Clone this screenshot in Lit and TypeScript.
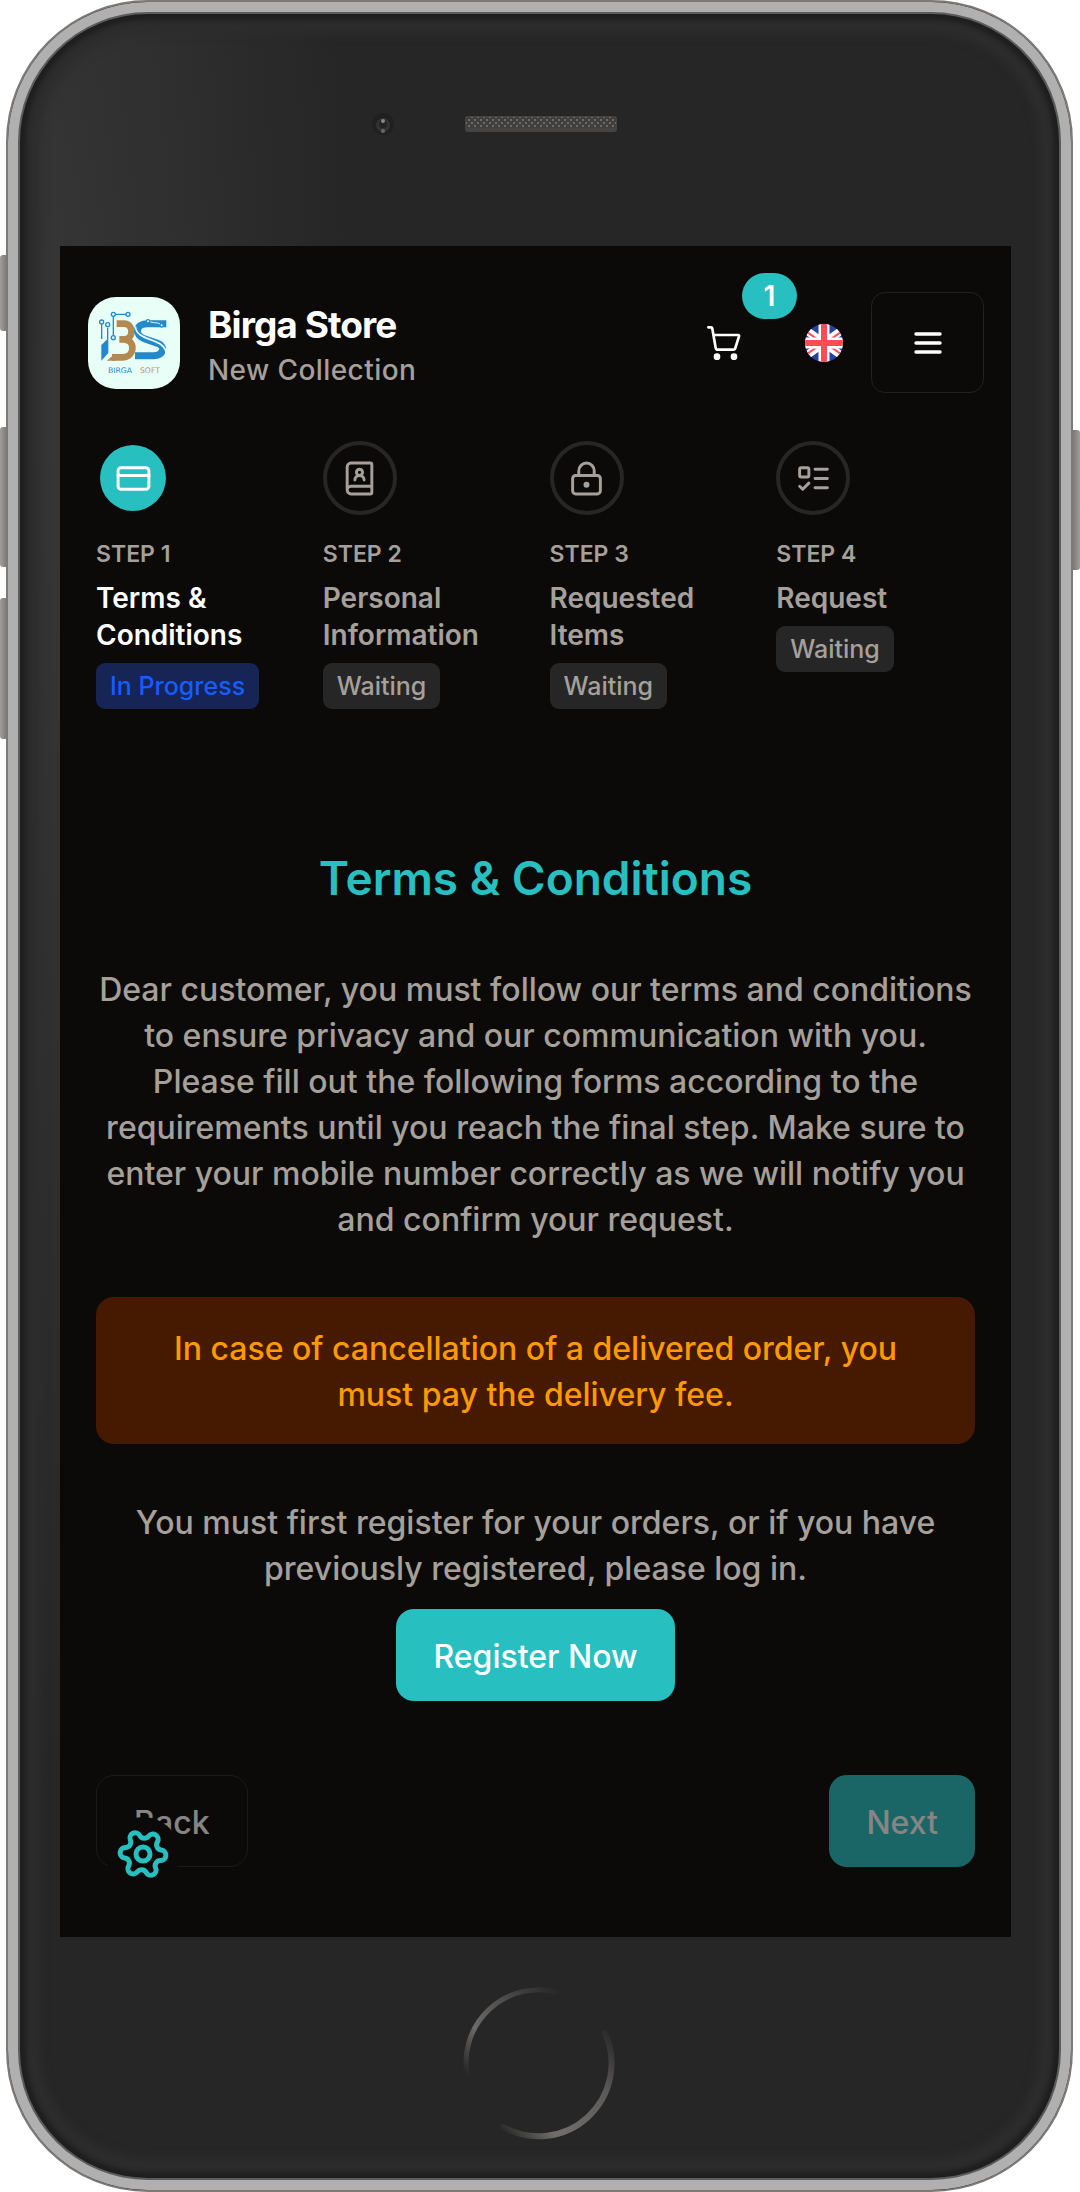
import { LitElement, html, svg, css } from "lit";
import { customElement } from "lit/decorators.js";

interface Step {
  label: string;
  title: string;
  status: string;
  active: boolean;
  icon: unknown;
}

const cardIcon = svg`<rect x="2" y="5" width="20" height="14" rx="2"/><path d="M2 10h20"/>`;
const bookIcon = svg`<path d="M15 13a3 3 0 1 0-6 0"/><path d="M4 19.5v-15A2.5 2.5 0 0 1 6.5 2H19a1 1 0 0 1 1 1v18a1 1 0 0 1-1 1H6.5a1 1 0 0 1 0-5H20"/><circle cx="12" cy="8" r="2"/>`;
const lockIcon = svg`<circle cx="12" cy="16" r="1"/><rect x="3" y="10" width="18" height="12" rx="2"/><path d="M7 10V7a5 5 0 0 1 10 0v3"/>`;
const listIcon = svg`<rect x="3" y="5" width="6" height="6" rx="1"/><path d="m3 17 2 2 4-4M13 6h8M13 12h8M13 18h8"/>`;

const steps: Step[] = [
  { label: "STEP 1", title: "Terms & Conditions", status: "In Progress", active: true, icon: cardIcon },
  { label: "STEP 2", title: "Personal Information", status: "Waiting", active: false, icon: bookIcon },
  { label: "STEP 3", title: "Requested Items", status: "Waiting", active: false, icon: lockIcon },
  { label: "STEP 4", title: "Request", status: "Waiting", active: false, icon: listIcon },
];

/** Six-lobed gear outline: convex arcs for the teeth joined by concave arcs. */
function gearPath(): string {
  const tooth = 17.5;
  const valley = 21;
  const r = 5.25;
  const at = (radius: number, deg: number) => {
    const a = (deg * Math.PI) / 180;
    return [radius * Math.cos(a), radius * Math.sin(a)];
  };
  const mid = (a: number[], b: number[]) =>
    `${((a[0] + b[0]) / 2).toFixed(2)} ${((a[1] + b[1]) / 2).toFixed(2)}`;
  let d = "";
  for (let k = 0; k < 6; k++) {
    const angle = 4 + k * 60;
    const t = at(tooth, angle);
    const before = at(valley, angle - 30);
    const after = at(valley, angle + 30);
    const next = at(tooth, angle + 60);
    if (k === 0) d += `M${mid(before, t)}`;
    d += `A${r} ${r} 0 0 1 ${mid(t, after)}A${r} ${r} 0 0 0 ${mid(after, next)}`;
  }
  return d + "Z";
}

@customElement("store-header")
export class StoreHeader extends LitElement {
  static styles = css`
    :host { display: block; }
    .bar { display: flex; align-items: center; justify-content: space-between; padding: 46px 27px 0 28px; }
    .brand { display: flex; align-items: center; gap: 28px; text-decoration: none; }
    .logo { display: block; width: 92px; height: 92px; border-radius: 28px; background: #e8fff8; }
    .names { display: flex; flex-direction: column; gap: 4px; padding-top: 6px; }
    .name { margin: 0; font-size: 37px; line-height: 46px; font-weight: 700; letter-spacing: -0.025em; color: #fff; }
    .tagline { font-size: 28px; line-height: 37px; font-weight: 500; letter-spacing: 0.015em; color: #a6a09b; }
    .actions { display: flex; align-items: center; gap: 28px; }
    button { margin: 0; border: 0; padding: 0; background: none; color: #fff; font: inherit; }
    .cart { position: relative; display: flex; align-items: center; height: 38px; padding: 0 36px; }
    .cart svg { display: block; width: 34px; height: 34px; }
    .count {
      position: absolute; top: -51px; right: -20px; min-width: 55px; box-sizing: border-box;
      border-radius: 23px; background: #28bfc1; font-size: 28px; line-height: 46px; font-weight: 600; text-align: center;
    }
    .lang svg { display: block; width: 38px; height: 38px; }
    .menu {
      display: flex; align-items: center; justify-content: center; width: 113px; height: 101px;
      box-sizing: border-box; border: 1px solid #23201f; border-radius: 14px;
    }
    .menu svg { display: block; width: 28px; height: 24px; }
    .wordmark { font-family: "DejaVu Sans", sans-serif; font-size: 23px; }
  `;

  render() {
    return html`
      <header class="bar">
        <a class="brand" href="#" aria-label="Birga Store home">
          <svg class="logo" viewBox="0 0 276 276" aria-hidden="true">
            <path d="M86 80h22c30 0 30 47 0 47h-14M106 127c38 0 36 54-4 54H72" fill="none" stroke="#b5884f" stroke-width="20"/>
            <path d="M80 171l-24 20h26z" fill="#b5884f"/>
            <path d="M235 80h-56c-36 0-42 34-8 46l38 13c26 10 16 37-12 37h-56" fill="none" stroke="#2389cb" stroke-width="21"/>
            <path d="M142 88c4 50 92 30 93 86" fill="none" stroke="#e8fff8" stroke-width="5"/>
            <path d="M186 74c14 6 24 0 34 10" fill="none" stroke="#e8fff8" stroke-width="3"/>
            <path d="M40 144l21-20v44l-21 23z" fill="#2389cb"/>
            <g fill="none" stroke="#2389cb" stroke-width="4">
              <path d="M41 82v44M59 92v34M76 59v56M82 52h32"/>
              <g fill="#e8fff8">
                <circle cx="41" cy="75" r="6"/><circle cx="59" cy="83" r="6"/>
                <circle cx="76" cy="52" r="6"/><circle cx="120" cy="52" r="6"/><circle cx="76" cy="122" r="6"/>
                <circle cx="180" cy="73" r="5"/><circle cx="221" cy="85" r="5"/>
              </g>
            </g>
            <text class="wordmark" x="60" y="227" fill="#2389cb">BIRGA</text>
            <text class="wordmark" x="156" y="227" fill="#c0915c">SOFT</text>
          </svg>
          <div class="names">
            <h1 class="name">Birga Store</h1>
            <span class="tagline">New Collection</span>
          </div>
        </a>
        <div class="actions">
          <button class="cart" type="button" aria-label="Cart">
            <svg viewBox="0 0 102 102" fill="none" stroke="currentColor" stroke-width="8" stroke-linecap="round" stroke-linejoin="round" aria-hidden="true">
              <path d="M4 4h8q3 0 4 4l10 57q1 6 6 6h47q5 0 6-5l11-35q1-4-3-4H19"/>
              <circle cx="30" cy="92" r="6" fill="currentColor"/><circle cx="81" cy="92" r="6" fill="currentColor"/>
            </svg>
            <span class="count">1</span>
          </button>
          <button class="lang" type="button" aria-label="English">
            <svg viewBox="0 0 38 38" aria-hidden="true">
              <defs><clipPath id="disc"><circle cx="19" cy="19" r="19"/></clipPath></defs>
              <g clip-path="url(#disc)">
                <path d="M0 0h38v38H0z" fill="#2b41a2"/>
                <path d="M-2 4l42 30M40 4l-42 30" stroke="#fff" stroke-width="8"/>
                <path d="M-2 5l21 15M40 5l-21 15M19 18l21 15M19 18l-21 15" stroke="#ff4b55" stroke-width="2"/>
                <path d="M19 0v38M0 19h38" stroke="#fff" stroke-width="11"/>
                <path d="M19 0v38M0 19h38" stroke="#ff4b55" stroke-width="6"/>
              </g>
            </svg>
          </button>
          <button class="menu" type="button" aria-label="Menu">
            <svg viewBox="0 0 28 24" fill="none" stroke="currentColor" stroke-width="3.4" stroke-linecap="round" aria-hidden="true">
              <path d="M2 3h24M2 12h24M2 21h24"/>
            </svg>
          </button>
        </div>
      </header>
    `;
  }
}

@customElement("order-steps")
export class OrderSteps extends LitElement {
  static styles = css`
    :host { display: block; }
    .steps { display: grid; grid-template-columns: repeat(4, minmax(0, 1fr)); gap: 28px; margin: 48px 36px 0; padding: 0; list-style: none; color: #a6a09b; }
    .step { display: flex; flex-direction: column; align-items: flex-start; gap: 9px; }
    .disc {
      display: flex; align-items: center; justify-content: center; width: 74px; height: 74px; box-sizing: border-box;
      margin-bottom: 14px; border: 4px solid #262626; border-radius: 50%; background-clip: padding-box;
    }
    .disc svg { display: block; width: 37px; height: 37px; }
    .label { font-size: 23px; line-height: 33px; font-weight: 600; }
    .title { font-size: 28px; line-height: 37px; font-weight: 600; }
    .status { padding: 0 14px; border-radius: 9px; background: #262626; font-size: 25px; line-height: 46px; font-weight: 500; }
    .active .disc { border-color: transparent; background-color: #28bfc1; color: #fff; }
    .active .title { color: #fff; }
    .active .status { background: #162456; color: #155dfc; }
  `;

  render() {
    return html`
      <ol class="steps">
        ${steps.map(
          (s) => html`
            <li class="step ${s.active ? "active" : ""}">
              <span class="disc">
                <svg viewBox="0 0 24 24" fill="none" stroke="currentColor" stroke-width="1.9" stroke-linecap="round" stroke-linejoin="round" aria-hidden="true">${s.icon}</svg>
              </span>
              <span class="label">${s.label}</span>
              <span class="title">${s.title}</span>
              <span class="status">${s.status}</span>
            </li>
          `
        )}
      </ol>
    `;
  }
}

@customElement("terms-panel")
export class TermsPanel extends LitElement {
  static styles = css`
    :host { display: block; }
    .panel { display: flex; flex-direction: column; padding: 137px 36px 0; text-align: center; font-size: 32px; line-height: 46px; font-weight: 500; color: #a6a09b; }
    h2 { margin: 0 0 57px; font-size: 46px; line-height: 64px; font-weight: 600; color: #28bfc1; }
    p { margin: 0; }
    .notice { margin: 54px 0 56px; padding: 29px 74px 26px; border-radius: 18px; background: #461901; color: #fe9a00; }
    .register { display: flex; flex-direction: column; align-items: center; gap: 17px; }
    button { margin: 0; box-sizing: border-box; height: 92px; padding: 4px 36px 0; border: 1px solid transparent; border-radius: 18px; font: inherit; color: #fff; background: #28bfc1; }
    .nav { position: relative; display: flex; justify-content: space-between; padding: 74px 36px 70px; font-size: 32px; line-height: 46px; font-weight: 500; }
    .nav button { opacity: 0.5; background-clip: border-box; }
    .nav .back { padding: 4px 37px 0; border-color: #2d2a28; background: none; }
    .nav .settings {
      position: absolute; left: 46px; bottom: 46px; display: flex; align-items: center; justify-content: center;
      width: 74px; height: 74px; padding: 0; border: 0; border-radius: 50%; background: #0c0a09; color: #28bfc1; opacity: 1;
    }
    .settings svg { display: block; width: 52px; height: 52px; }
  `;

  render() {
    return html`
      <section class="panel">
        <h2>Terms &amp; Conditions</h2>
        <p>
          Dear customer, you must follow our terms and conditions to ensure privacy and our communication with you.
          Please fill out the following forms according to the requirements until you reach the final step. Make sure
          to enter your mobile number correctly as we will notify you and confirm your request.
        </p>
        <p class="notice">In case of cancellation of a delivered order, you must pay the delivery fee.</p>
        <div class="register">
          <p>You must first register for your orders, or if you have previously registered, please log in.</p>
          <button type="button">Register Now</button>
        </div>
      </section>
      <nav class="nav" aria-label="Steps">
        <button class="back" type="button" disabled>Back</button>
        <button class="next" type="button" disabled>Next</button>
        <button class="settings" type="button" aria-label="Settings">
          <svg viewBox="-26 -26 52 52" fill="none" stroke="currentColor" stroke-width="5" aria-hidden="true">
            <path d=${gearPath()} /><circle r="7"/>
          </svg>
        </button>
      </nav>
    `;
  }
}

@customElement("app-root")
export class AppRoot extends LitElement {
  static styles = css`
    :host { display: block; min-height: 100vh; background: #fff; font-family: Inter, sans-serif; }
    .stage { position: relative; padding: 0 7px 0 6px; }
    .device {
      position: relative; box-sizing: border-box; padding: 0 60px 0 52px; border: 2px solid #7c7977; border-radius: 142px;
      background: radial-gradient(ellipse 340px 1400px at 0 400px, #383838, rgba(38, 38, 38, 0)), #262626;
      box-shadow: inset 0 0 0 10px #b0b0b0, inset 0 0 0 12px #5e5c5a, inset 0 0 4px 18px #1f1f1f, inset 0 0 10px 32px #2d2d2d;
    }
    .key { position: absolute; left: 0; width: 7px; border-radius: 3px 0 0 3px; background: linear-gradient(90deg, #a09d9b, #7d7875); }
    .mute { top: 255px; height: 76px; }
    .up { top: 427px; height: 140px; }
    .down { top: 598px; height: 141px; }
    .power { left: auto; right: 0; top: 430px; height: 140px; border-radius: 0 3px 3px 0; background: linear-gradient(90deg, #7d7875, #a09d9b); }
    .top { display: flex; justify-content: center; align-items: center; gap: 70px; height: 244px; padding-right: 84px; box-sizing: border-box; }
    .top svg { display: block; }
    .lens { width: 24px; height: 24px; }
    .grille { width: 152px; height: 16px; }
    .screen { background: #0c0a09; }
    .chin { display: flex; justify-content: center; padding: 48px 0 49px 6px; }
    .home { display: block; width: 156px; height: 156px; }
  `;

  render() {
    return html`
      <div class="stage">
        <span class="key mute"></span><span class="key up"></span><span class="key down"></span><span class="key power"></span>
        <div class="device">
          <div class="top">
            <svg class="lens" viewBox="0 0 24 24" aria-hidden="true">
              <circle cx="12" cy="12" r="11" fill="#202020"/><circle cx="12" cy="13" r="7" fill="#343332"/>
              <circle cx="12" cy="12" r="4" fill="#232323"/><circle cx="12" cy="9" r="2" fill="#8a8886"/><circle cx="12" cy="19" r="2" fill="#6a6866"/>
            </svg>
            <svg class="grille" viewBox="0 0 152 16" aria-hidden="true">
              <defs>
                <pattern id="mesh" width="6" height="6" patternUnits="userSpaceOnUse">
                  <path d="M0 0h6v6H0z" fill="#403f3e"/><circle cx="1" cy="1" r="1" fill="#7b7977"/><circle cx="4" cy="4" r="1" fill="#7b7977"/>
                </pattern>
              </defs>
              <rect width="152" height="16" rx="3" fill="#454443"/><rect x="1" y="1" width="150" height="11" rx="2" fill="url(#mesh)"/>
            </svg>
          </div>
          <main class="screen">
            <store-header></store-header>
            <order-steps></order-steps>
            <terms-panel></terms-panel>
          </main>
          <div class="chin">
            <svg class="home" viewBox="-78 -78 156 156" fill="none" stroke-linecap="round" aria-hidden="true">
              <defs>
                <linearGradient id="rim-a" gradientUnits="userSpaceOnUse" x1="-74" y1="10" x2="20" y2="-74">
                  <stop offset="0" stop-color="#262626"/><stop offset="0.3" stop-color="#6c6a68"/><stop offset="0.6" stop-color="#504e4d"/><stop offset="1" stop-color="#262626"/>
                </linearGradient>
                <linearGradient id="rim-b" gradientUnits="userSpaceOnUse" x1="70" y1="-35" x2="-40" y2="66">
                  <stop offset="0" stop-color="#262626"/><stop offset="0.3" stop-color="#5c5a59"/><stop offset="0.75" stop-color="#716f6c"/><stop offset="1" stop-color="#262626"/>
                </linearGradient>
              </defs>
              <path d="M-72 12A73 73 0 0 1 18 -71" stroke="url(#rim-a)" stroke-width="5"/>
              <path d="M66 -30A73 73 0 0 1 -36 64" stroke="url(#rim-b)" stroke-width="6"/>
            </svg>
          </div>
        </div>
      </div>
    `;
  }
}
